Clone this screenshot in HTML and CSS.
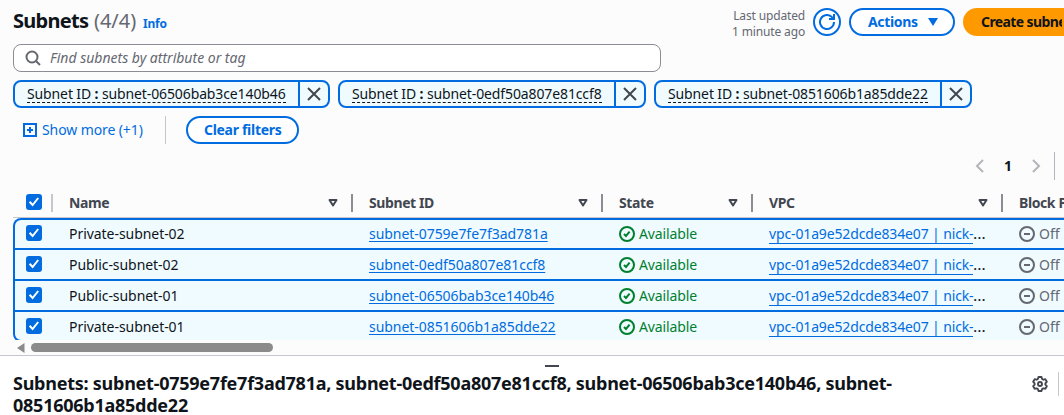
FILE: index.html
```html
<!DOCTYPE html>
<html lang="en">
<head>
<meta charset="utf-8">
<title>Subnets</title>
<link rel="stylesheet" href="styles.css">
</head>
<body>
<svg class="defs" width="0" height="0">
  <symbol id="check" viewBox="0 0 16 16"><path d="M3.6 7.8 6.6 11l5.6-7" fill="none" stroke="#fff" stroke-width="2"/></symbol>
  <symbol id="ok" viewBox="0 0 16 16"><g fill="none" stroke="currentColor" stroke-width="2"><circle cx="8" cy="8" r="7"/><path d="m5 8 2 2 3.6-4.3"/></g></symbol>
  <symbol id="off" viewBox="0 0 16 16"><g fill="none" stroke="currentColor" stroke-width="2"><circle cx="8" cy="8" r="7"/><path d="M5 8h6"/></g></symbol>
  <symbol id="close" viewBox="0 0 16 16"><path d="m2 2 12 12M14 2 2 14" fill="none" stroke="currentColor" stroke-width="2"/></symbol>
  <symbol id="sort" viewBox="0 0 16 16"><path d="M4.500 5h7L8 10.500z" fill="none" stroke="currentColor" stroke-width="2" stroke-linejoin="round"/></symbol>
</svg>
<main class="panel">
  <header class="header">
    <h1 class="title">Subnets <span class="count">(4/4)</span></h1>
    <a class="info">Info</a>
    <div class="updated"><span>Last updated</span><span class="ago">1 minute ago</span></div>
    <button class="refresh"><svg width="16" height="16" viewBox="0 0 16 16" fill="none" stroke="currentColor" stroke-width="2"><path d="M15 8a7 7 0 1 1-2-4.9L15 5"/><path d="M15 0v5h-5"/></svg></button>
    <button class="button actions"><span>Actions</span><svg width="10" height="8" viewBox="0 0 10 8"><path d="M0 0h10L5 8z" fill="currentColor"/></svg></button>
    <button class="button create">Create subnet</button>
  </header>
  <div class="search"><svg width="16" height="16" viewBox="0 0 16 16" fill="none" stroke="currentColor" stroke-width="2"><circle cx="7" cy="7" r="5.5"/><path d="m11 11 4 4"/></svg><span>Find subnets by attribute or tag</span></div>
  <div class="chips">
    <div class="chip c1"><span class="chip-label"><span>Subnet ID <b>:</b> subnet-06506bab3ce140b46</span></span><span class="chip-close"><svg width="16" height="16"><use href="#close"/></svg></span></div>
    <div class="chip c2"><span class="chip-label"><span>Subnet ID <b>:</b> subnet-0edf50a807e81ccf8</span></span><span class="chip-close"><svg width="16" height="16"><use href="#close"/></svg></span></div>
    <div class="chip c3"><span class="chip-label"><span>Subnet ID <b>:</b> subnet-0851606b1a85dde22</span></span><span class="chip-close"><svg width="16" height="16"><use href="#close"/></svg></span></div>
  </div>
  <div class="filters">
    <a class="more"><svg width="14" height="14" viewBox="0 0 14 14" fill="none" stroke="currentColor" stroke-width="2"><path d="M1 1h12v12H1zM4 7h6M7 4v6"/></svg><span>Show more (+1)</span></a>
    <button class="button clear">Clear filters</button>
  </div>
  <nav class="pages">
    <svg width="16" height="16" viewBox="0 0 16 16"><path d="M11 2 5 8l6 6" fill="none" stroke="currentColor" stroke-width="2"/></svg>
    <b>1</b>
    <svg width="16" height="16" viewBox="0 0 16 16"><path d="m5 2 6 6-6 6" fill="none" stroke="currentColor" stroke-width="2"/></svg>
    <i></i>
  </nav>
  <div class="table">
    <div class="row head">
      <div class="cell pick"><span class="box"><svg width="16" height="16"><use href="#check"/></svg></span></div>
      <div class="cell"><span>Name</span><svg width="16" height="16"><use href="#sort"/></svg></div>
      <div class="cell"><span>Subnet ID</span><svg width="16" height="16"><use href="#sort"/></svg></div>
      <div class="cell"><span>State</span><svg width="16" height="16"><use href="#sort"/></svg></div>
      <div class="cell"><span>VPC</span><svg width="16" height="16"><use href="#sort"/></svg></div>
      <div class="cell last"><span>Block P</span></div>
    </div>
    <div class="row">
      <div class="cell pick"><span class="box"><svg width="16" height="16"><use href="#check"/></svg></span></div>
      <div class="cell name">Private-subnet-02</div>
      <div class="cell"><a class="id">subnet-0759e7fe7f3ad781a</a></div>
      <div class="cell state"><svg width="16" height="16"><use href="#ok"/></svg><span>Available</span></div>
      <div class="cell vpc"><a>vpc-01a9e52dcde834e07 | nick-</a><span>…</span></div>
      <div class="cell off"><svg width="16" height="16"><use href="#off"/></svg><span>Off</span></div>
    </div>
    <div class="row">
      <div class="cell pick"><span class="box"><svg width="16" height="16"><use href="#check"/></svg></span></div>
      <div class="cell name">Public-subnet-02</div>
      <div class="cell"><a class="id">subnet-0edf50a807e81ccf8</a></div>
      <div class="cell state"><svg width="16" height="16"><use href="#ok"/></svg><span>Available</span></div>
      <div class="cell vpc"><a>vpc-01a9e52dcde834e07 | nick-</a><span>…</span></div>
      <div class="cell off"><svg width="16" height="16"><use href="#off"/></svg><span>Off</span></div>
    </div>
    <div class="row">
      <div class="cell pick"><span class="box"><svg width="16" height="16"><use href="#check"/></svg></span></div>
      <div class="cell name">Public-subnet-01</div>
      <div class="cell"><a class="id">subnet-06506bab3ce140b46</a></div>
      <div class="cell state"><svg width="16" height="16"><use href="#ok"/></svg><span>Available</span></div>
      <div class="cell vpc"><a>vpc-01a9e52dcde834e07 | nick-</a><span>…</span></div>
      <div class="cell off"><svg width="16" height="16"><use href="#off"/></svg><span>Off</span></div>
    </div>
    <div class="row">
      <div class="cell pick"><span class="box"><svg width="16" height="16"><use href="#check"/></svg></span></div>
      <div class="cell name">Private-subnet-01</div>
      <div class="cell"><a class="id">subnet-0851606b1a85dde22</a></div>
      <div class="cell state"><svg width="16" height="16"><use href="#ok"/></svg><span>Available</span></div>
      <div class="cell vpc"><a>vpc-01a9e52dcde834e07 | nick-</a><span>…</span></div>
      <div class="cell off"><svg width="16" height="16"><use href="#off"/></svg><span>Off</span></div>
    </div>
  </div>
  <div class="scroll"><svg width="8" height="10" viewBox="0 0 8 10"><path d="M7.5 0v10L0 5z" fill="#8b8b8b"/></svg><span class="thumb"></span></div>
</main>
<section class="split">
  <div class="handle"></div>
  <div class="split-head">
    <h2>Subnets: subnet-0759e7fe7f3ad781a, subnet-0edf50a807e81ccf8, subnet-06506bab3ce140b46, subnet-<br><span>0851606b1a85dde22</span></h2>
    <svg width="16" height="16" viewBox="0 0 16 16" fill="none" stroke="currentColor" stroke-width="1.9" stroke-linejoin="round"><path d="M6.5 1h3l.6 2 1.2.7 2-.5 1.5 2.6L13.400 7.300v1.400l1.400 1.500-1.500 2.600-2-.5-1.200.7-.6 2h-3l-.6-2-1.200-.7-2 .5-1.500-2.600L2.600 8.700V7.300L1.200 5.800l1.500-2.600 2 .5L5.900 3z"/><circle cx="8" cy="8" r="2"/></svg>
    <i></i>
  </div>
</section>
</body>
</html>
```
FILE: styles.css
```css
* { box-sizing: border-box; }
body { margin: 0; width: 1064px; height: 415px; overflow: hidden; background: #fcfcfc; color: #0f141a; font: 14px/20px "Noto Sans", "Open Sans", sans-serif; }
svg { flex: none; display: block; }
.defs { position: absolute; }
h1, h2 { margin: 0; }
button { font: inherit; margin: 0; }
.panel { height: 355px; padding: 8px 0 0 13px; overflow: hidden; }
.header { display: flex; height: 28px; }
.title { font-size: 20px; line-height: 25px; white-space: nowrap; width: 122px; letter-spacing: -.7px; }
.count { color: #656871; font-weight: 400; letter-spacing: 0; margin-left: 1px; }
.info { color: #006ce0; font-size: 12px; font-weight: 700; line-height: 31px; margin-left: 8px; letter-spacing: -.2px; }
.updated { margin-left: auto; margin-right: 8px; display: flex; flex-direction: column; text-align: right; font-size: 12px; line-height: 16px; color: #656871; letter-spacing: -.15px; }
.refresh { width: 28px; height: 28px; padding: 0; flex: none; border: 2px solid #006ce0; border-radius: 50%; background: #fff; color: #006ce0; display: flex; align-items: center; justify-content: center; margin-right: 8px; }
.button { flex: none; height: 28px; border: 2px solid #006ce0; border-radius: 20px; background: #fff; color: #006ce0; font-weight: 700; padding: 0 16px; display: flex; align-items: center; white-space: nowrap; letter-spacing: -.35px; }
.actions { width: 106px; justify-content: space-between; margin-right: 8px; padding: 0 15px 0 17px; }
.create { width: 101px; background: #f90; border-color: #f90; color: #0f141a; border-radius: 20px 0 0 20px; overflow: hidden; letter-spacing: -.6px; justify-content: flex-start; }
.search { width: 648px; height: 28px; margin-top: 8px; border: 1px solid #8c8c94; border-radius: 8px; background: #fff; display: flex; align-items: center; padding-left: 11px; gap: 9px; color: #656871; font-style: italic; }
.chips { display: flex; gap: 8px; margin-top: 8px; }
.chip { height: 28px; border: 2px solid #006ce0; border-radius: 8px; background: #f0fbff; display: flex; white-space: nowrap; letter-spacing: -.12px; }
.c1 { width: 317px; } .c2 { width: 308px; } .c3 { width: 318px; }
.chip-label { flex: 1; padding-left: 12px; line-height: 23px; }
.chip-label > span { display: inline-block; height: 21px; border-bottom: 1px dashed #0f141a; }
.chip-close { width: 30px; border-left: 2px solid #006ce0; display: flex; align-items: center; justify-content: center; color: #424650; }
.filters { display: flex; height: 28px; margin-top: 8px; }
.more { display: flex; align-items: center; gap: 5px; width: 153px; padding-left: 10px; color: #006ce0; border-right: 1px solid #c6c6cd; margin-right: 20px; white-space: nowrap; letter-spacing: -.1px; }
.clear { width: 113px; letter-spacing: -.3px; }
.pages { display: flex; align-items: center; justify-content: flex-end; height: 28px; margin-top: 8px; padding-right: 9px; color: #b4b4bb; }
.pages b { width: 40px; text-align: center; color: #0f141a; }
.pages i { width: 1px; height: 28px; background: #b4b4bb; margin-left: 10px; }
.table { margin-top: 8px; height: 152px; overflow: hidden; }
.row { display: grid; grid-template-columns: 40px 300px 250px 150px 250px 100px; width: 1090px; height: 31px; background: #f0fbff; border: 2px solid #006ce0; border-bottom: 0; }
.row.head { height: 30px; background: none; border: 0; border-bottom: 1px solid #c6c6cd; color: #424650; font-weight: 700; letter-spacing: -.4px; }
.row:nth-child(2) { border-radius: 8px 0 0 0; height: 30px; }
.row:nth-child(2) .cell { height: 27px; }
.row:last-child { border-radius: 0 0 0 8px; border-bottom: 2px solid #006ce0; height: 32px; }
.row:not(.head) > .cell { margin-left: -2px; }
.cell { display: flex; align-items: center; padding-left: 16px; white-space: nowrap; min-width: 0; height: 29px; }
.pick, .row:not(.head) > .pick { padding-left: 13px; }
.box { width: 16px; height: 16px; border-radius: 3px; background: #006ce0; margin-top: -2px; }
.row:nth-child(2) .box { margin-top: -1px; }
.head .cell { justify-content: space-between; padding-right: 10px; height: 18px; margin-top: 6px; border-right: 2px solid #8c8c94; }
.head .pick { border-color: #c6c6cd; padding-right: 0; }
.head .last { border: 0; }
.name { letter-spacing: -.05px; }
.id, .vpc a { color: #006ce0; text-decoration: underline; text-underline-offset: 2px; letter-spacing: -.05px; }
.vpc a { text-decoration: none; border-bottom: 1px solid #006ce0; height: 20px; letter-spacing: -.14px; }
.vpc span { width: 14px; transform: scaleX(1.15); transform-origin: left; }
.state { color: #00802f; gap: 4px; letter-spacing: -.12px; }
.off { color: #656871; gap: 4px; }
.scroll { display: flex; align-items: center; height: 9px; margin-top: 3px; padding-left: 4px; }
.thumb { width: 242px; height: 9px; border-radius: 5px; background: #8b8b8b; margin-left: 6px; }
.split { height: 60px; border-top: 1px solid #c6c6cd; background: #fff; padding: 9px 0 0 13px; color: #424650; }
.handle { width: 14px; height: 2px; background: #424650; margin-left: 532px; }
.split-head { display: flex; margin-top: 5px; }
.split h2 { font-size: 18px; line-height: 22px; color: #0f141a; width: 1019px; white-space: nowrap; letter-spacing: -.25px; }
.split-head > svg { margin-top: 4px; }
.split-head > i { width: 1px; height: 24px; background: #c6c6cd; margin-left: 10px; }
```
